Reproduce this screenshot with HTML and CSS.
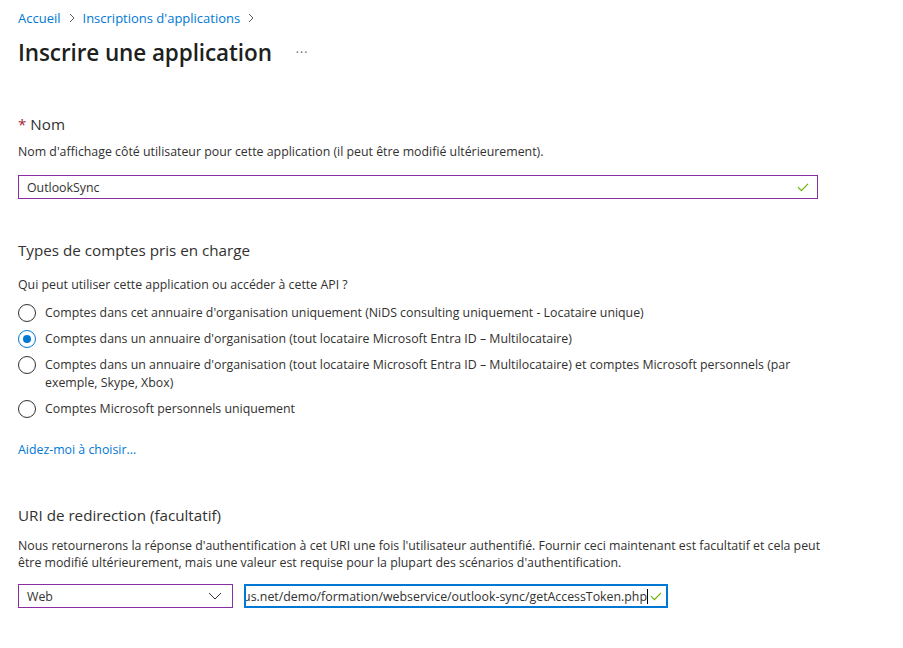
FILE: index.html
```html
<!DOCTYPE html>
<html lang="fr">
<head>
<meta charset="utf-8">
<title>Inscrire une application</title>
<link rel="stylesheet" href="styles.css">
</head>
<body>
<div class="page">
  <nav class="crumbs">
    <a class="link">Accueil</a>
    <span class="sep"><svg width="8" height="10" viewBox="0 0 8 10"><path d="M2 1l4 4-4 4" fill="none" stroke="#605e5c" stroke-width="1"/></svg></span>
    <a class="link">Inscriptions d'applications</a>
    <span class="sep"><svg width="8" height="10" viewBox="0 0 8 10"><path d="M2 1l4 4-4 4" fill="none" stroke="#605e5c" stroke-width="1"/></svg></span>
  </nav>
  <div class="titlebar">
    <h1 class="title">Inscrire une application</h1>
    <span class="more">···</span>
  </div>

  <div class="label-lg name-label"><span class="req">*</span> Nom</div>
  <p class="desc desc-name">Nom d'affichage côté utilisateur pour cette application (il peut être modifié ultérieurement).</p>
  <div class="field field-name">
    <span class="value">OutlookSync</span>
    <svg class="check" width="12" height="10" viewBox="0 0 12 10"><path d="M1 5.2l3.4 3.4L11 1.8" fill="none" stroke="#6bb700" stroke-width="1.2"/></svg>
  </div>

  <div class="label-lg types-label">Types de comptes pris en charge</div>
  <p class="desc desc-types">Qui peut utiliser cette application ou accéder à cette API ?</p>
  <div class="radios">
    <div class="radio"><span class="dot"></span><span class="rtext">Comptes dans cet annuaire d'organisation uniquement (NiDS consulting uniquement - Locataire unique)</span></div>
    <div class="radio"><span class="dot on"></span><span class="rtext">Comptes dans un annuaire d'organisation (tout locataire Microsoft Entra ID – Multilocataire)</span></div>
    <div class="radio"><span class="dot"></span><span class="rtext">Comptes dans un annuaire d'organisation (tout locataire Microsoft Entra ID – Multilocataire) et comptes Microsoft personnels (par exemple, Skype, Xbox)</span></div>
    <div class="radio"><span class="dot"></span><span class="rtext">Comptes Microsoft personnels uniquement</span></div>
  </div>
  <a class="link help">Aidez-moi à choisir...</a>

  <div class="label-lg uri-label">URI de redirection (facultatif)</div>
  <p class="desc desc-uri">Nous retournerons la réponse d'authentification à cet URI une fois l'utilisateur authentifié. Fournir ceci maintenant est facultatif et cela peut être modifié ultérieurement, mais une valeur est requise pour la plupart des scénarios d'authentification.</p>
  <div class="uri-row">
    <div class="field select">
      <span class="value">Web</span>
      <svg class="chev" width="14" height="8" viewBox="0 0 14 8"><path d="M1 1l6 6 6-6" fill="none" stroke="#323130" stroke-width="1"/></svg>
    </div>
    <div class="field uri focus">
      <div class="scroll"><span class="value">https://www.nidscampus.net/demo/formation/webservice/outlook-sync/getAccessToken.php</span><span class="caret"></span></div>
      <svg class="check" width="12" height="10" viewBox="0 0 12 10"><path d="M1 5.2l3.4 3.4L11 1.8" fill="none" stroke="#6bb700" stroke-width="1.2"/></svg>
    </div>
  </div>
</div>
</body>
</html>
```

FILE: styles.css
```css
html, body {
  margin: 0;
  padding: 0;
  background: #ffffff;
}
body {
  font-family: "Open Sans", "Noto Sans", sans-serif;
  color: #323130;
  font-size: 12.35px;
}
.page {
  padding: 8px 0 0 18px;
}
.link {
  color: #0078d4;
  text-decoration: none;
  cursor: pointer;
}
.crumbs {
  display: flex;
  align-items: center;
  height: 20px;
  font-size: 13px;
}
.sep {
  display: flex;
  align-items: center;
  margin: 0 7px 0 7px;
}
.titlebar {
  display: flex;
  align-items: center;
  height: 32px;
  margin-top: 8px;
}
.title {
  margin: 0;
  font-size: 22.5px;
  font-weight: 600;
  color: #201f1e;
  letter-spacing: -0.1px;
}
.more {
  margin-left: 24px;
  color: #605e5c;
  font-size: 12px;
  letter-spacing: 1px;
}
.label-lg {
  font-size: 15.2px;
  line-height: 22px;
  height: 22px;
}
.req {
  color: #a4262c;
}
.name-label { margin-top: 45px; }
.desc {
  margin: 0;
  line-height: 18px;
}
.desc-name { margin-top: 8px; }
.field {
  box-sizing: border-box;
  height: 24px;
  border: 1px solid #8a2da5;
  display: flex;
  align-items: center;
  padding: 0 8px;
  background: #fff;
}
.field-name {
  width: 800px;
  margin-top: 14px;
  justify-content: space-between;
}
.value {
  white-space: nowrap;
  font-size: 12.35px;
}
.types-label { margin-top: 40px; }
.desc-types { margin-top: 15px; }
.radios {
  display: flex;
  flex-direction: column;
  gap: 8px;
  margin-top: 10px;
  width: 800px;
}
.radio {
  display: flex;
  align-items: flex-start;
}
.dot {
  box-sizing: border-box;
  flex: 0 0 18px;
  width: 18px;
  height: 18px;
  border: 1px solid #323130;
  border-radius: 50%;
  margin-right: 9px;
  display: flex;
  align-items: center;
  justify-content: center;
}
.dot.on {
  border-color: #0078d4;
}
.dot.on::after {
  content: "";
  width: 8px;
  height: 8px;
  border-radius: 50%;
  background: #0078d4;
}
.rtext {
  line-height: 18px;
}
.help {
  display: block;
  margin-top: 23px;
  line-height: 18px;
}
.uri-label { margin-top: 45px; }
.desc-uri {
  margin-top: 11px;
  line-height: 17px;
  width: 805px;
}
.uri-row {
  display: flex;
  gap: 11px;
  margin-top: 13px;
}
.select {
  width: 215px;
  justify-content: space-between;
  padding-right: 10px;
}
.uri {
  width: 424px;
  border: 2px solid #0078d4;
  padding: 0 4px 0 0;
}
.scroll {
  flex: 1;
  overflow: hidden;
  display: flex;
  justify-content: flex-end;
  align-items: center;
}
.caret {
  width: 1px;
  height: 15px;
  background: #000;
  flex: 0 0 1px;
}
.check {
  flex: 0 0 12px;
}
.uri .check {
  margin-left: 2px;
}
```
